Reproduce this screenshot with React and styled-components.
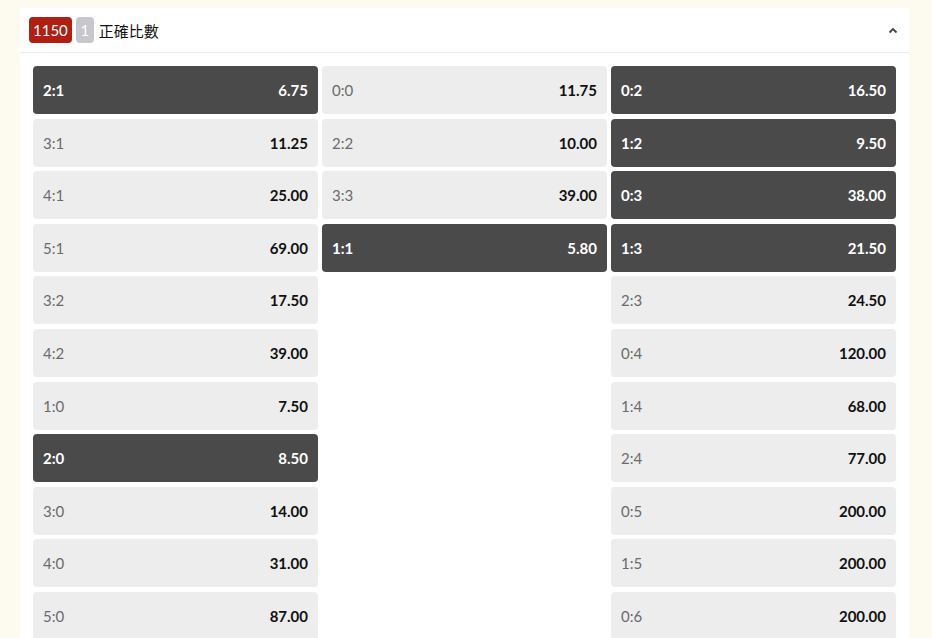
import React from 'react';
import styled, { createGlobalStyle } from 'styled-components';

const Global = createGlobalStyle`
  body {
    margin: 0;
    background: #fdfbef;
    font-family: Lato, "Noto Sans CJK TC", sans-serif;
  }
`;

const Page = styled.div`
  padding: 8px 23px 0 20px;
`;

const Card = styled.div`
  background: #fff;
`;

const Header = styled.div`
  display: flex;
  align-items: center;
  height: 44px;
  padding: 0 9px;
  border-bottom: 1px solid #e9ecf3;
`;

const Badge = styled.span`
  display: inline-flex;
  align-items: center;
  justify-content: center;
  height: 26px;
  padding: 0 4px;
  min-width: 10px;
  border-radius: 4px;
  background: ${p => p.$bg};
  color: #fff;
  font-size: 15px;
  margin-right: 4px;
`;

const Title = styled.span`
  font-size: 15px;
  color: #111;
  font-family: "Noto Sans CJK TC", sans-serif;
  margin-left: 1px;
`;

const Chevron = styled.span`
  margin-left: auto;
  margin-right: 2px;
  display: flex;
`;

const Body = styled.div`
  display: grid;
  grid-template-columns: repeat(3, 1fr);
  column-gap: 4px;
  padding: 13px 13px 0;
`;

const Col = styled.div`
  display: flex;
  flex-direction: column;
  gap: 4.6px;
`;

const Cell = styled.div`
  display: flex;
  align-items: center;
  justify-content: space-between;
  height: 48px;
  padding: 0 10px;
  border-radius: 4px;
  background: ${p => (p.$dark ? '#4a4a4a' : '#ededed')};
  font-size: 15px;
`;

const Label = styled.span`
  color: ${p => (p.$dark ? '#fff' : '#6b6b6b')};
  font-weight: ${p => (p.$dark ? 700 : 400)};
`;

const Odds = styled.span`
  color: ${p => (p.$dark ? '#fff' : '#111')};
  font-weight: 700;
`;

const cols = [
  [
    ['2:1', '6.75', 1], ['3:1', '11.25'], ['4:1', '25.00'], ['5:1', '69.00'],
    ['3:2', '17.50'], ['4:2', '39.00'], ['1:0', '7.50'], ['2:0', '8.50', 1],
    ['3:0', '14.00'], ['4:0', '31.00'], ['5:0', '87.00'],
  ],
  [['0:0', '11.75'], ['2:2', '10.00'], ['3:3', '39.00'], ['1:1', '5.80', 1]],
  [
    ['0:2', '16.50', 1], ['1:2', '9.50', 1], ['0:3', '38.00', 1], ['1:3', '21.50', 1],
    ['2:3', '24.50'], ['0:4', '120.00'], ['1:4', '68.00'], ['2:4', '77.00'],
    ['0:5', '200.00'], ['1:5', '200.00'], ['0:6', '200.00'],
  ],
];

export default function App() {
  return (
    <Page>
      <Global />
      <Card>
        <Header>
          <Badge $bg="#b01f12">1150</Badge>
          <Badge $bg="#c7c7cc">1</Badge>
          <Title>正確比數</Title>
          <Chevron>
            <svg width="10" height="7" viewBox="0 0 10 7">
              <path d="M1.5 5.5 L5 2 L8.5 5.5" fill="none" stroke="#444" strokeWidth="1.8" />
            </svg>
          </Chevron>
        </Header>
        <Body>
          {cols.map((col, i) => (
            <Col key={i}>
              {col.map(([score, odds, dark]) => (
                <Cell key={score} $dark={!!dark}>
                  <Label $dark={!!dark}>{score}</Label>
                  <Odds $dark={!!dark}>{odds}</Odds>
                </Cell>
              ))}
            </Col>
          ))}
        </Body>
      </Card>
    </Page>
  );
}
